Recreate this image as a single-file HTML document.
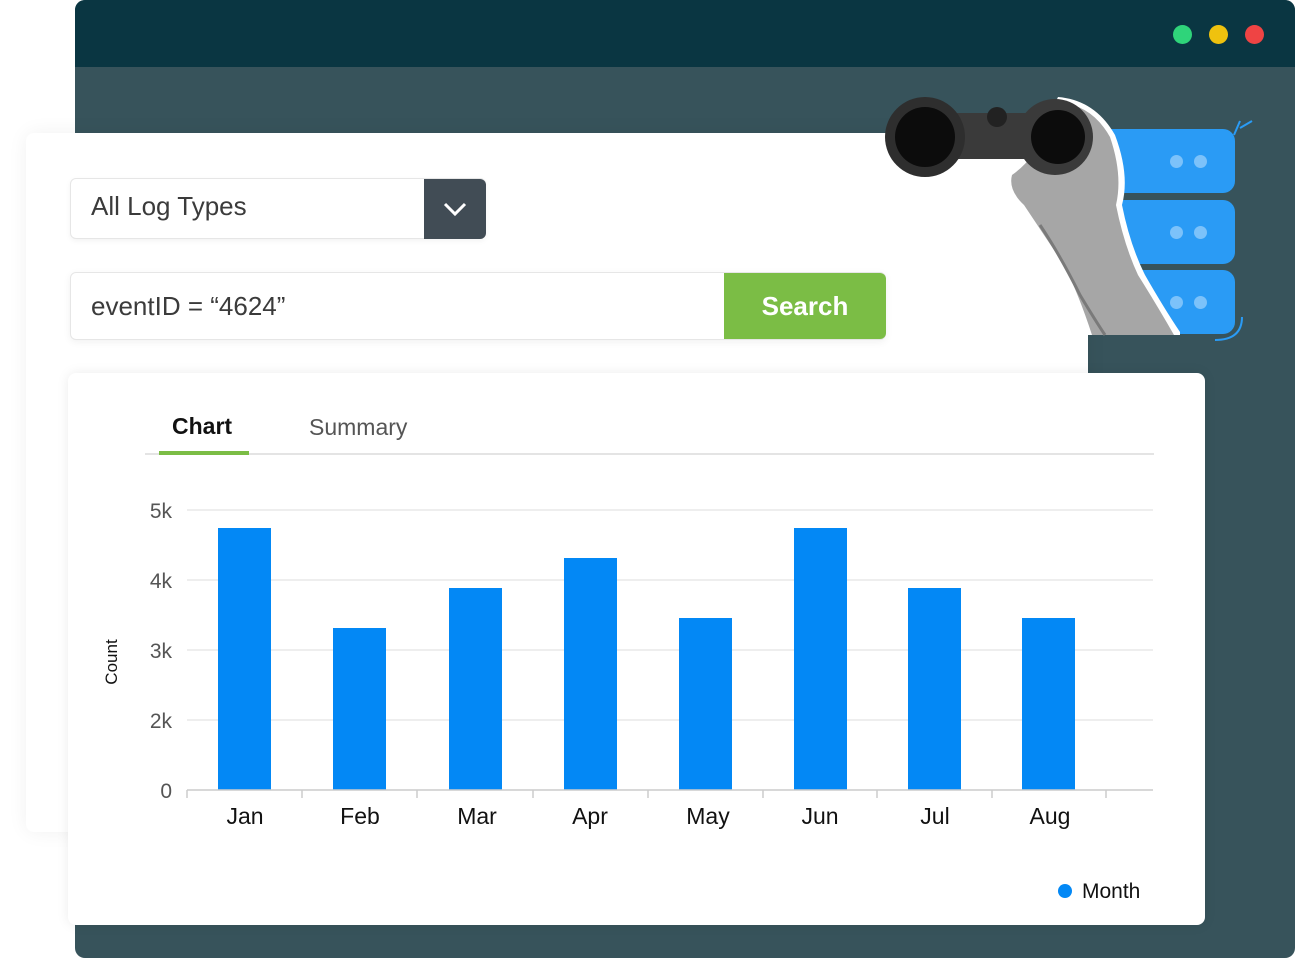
<!DOCTYPE html>
<html><head><meta charset="utf-8"><style>
*{margin:0;padding:0;box-sizing:border-box}
body{width:1302px;height:960px;background:#fff;position:relative;overflow:hidden;font-family:"Liberation Sans",sans-serif}
.abs{position:absolute}
</style></head><body>
<div class="abs" style="left:75px;top:0;width:1220px;height:958px;background:#37535b;border-radius:10px;overflow:hidden">
 <div class="abs" style="left:0;top:0;width:1220px;height:67px;background:#0a3642"></div>
 <div class="abs" style="left:1098px;top:25px;width:19px;height:19px;border-radius:50%;background:#2fd47a"></div>
 <div class="abs" style="left:1134px;top:25px;width:19px;height:19px;border-radius:50%;background:#efc20e"></div>
 <div class="abs" style="left:1170px;top:25px;width:19px;height:19px;border-radius:50%;background:#ef4444"></div>
</div>
<div class="abs" style="left:1100px;top:129px;width:135px;height:64px;background:#2a9bf5;border-radius:12px"></div>
<div class="abs" style="left:1100px;top:200px;width:135px;height:64px;background:#2a9bf5;border-radius:12px"></div>
<div class="abs" style="left:1100px;top:270px;width:135px;height:64px;background:#2a9bf5;border-radius:12px"></div>
<div class="abs" style="left:1170px;top:155px;width:13px;height:13px;border-radius:50%;background:#7cc2fa"></div>
<div class="abs" style="left:1194px;top:155px;width:13px;height:13px;border-radius:50%;background:#7cc2fa"></div>
<div class="abs" style="left:1170px;top:226px;width:13px;height:13px;border-radius:50%;background:#7cc2fa"></div>
<div class="abs" style="left:1194px;top:226px;width:13px;height:13px;border-radius:50%;background:#7cc2fa"></div>
<div class="abs" style="left:1170px;top:296px;width:13px;height:13px;border-radius:50%;background:#7cc2fa"></div>
<div class="abs" style="left:1194px;top:296px;width:13px;height:13px;border-radius:50%;background:#7cc2fa"></div>
<svg class="abs" style="left:1080px;top:95px" width="200" height="260">
 <path d="M160 26 L154 40 M172 26 L160 33" stroke="#2a9bf5" stroke-width="2" fill="none"/>
 <path d="M162 222 Q162 245 135 245" stroke="#2a9bf5" stroke-width="2" fill="none"/>
</svg>
<div class="abs" style="left:26px;top:133px;width:1062px;height:699px;background:#fff;border-radius:8px;box-shadow:0 0 20px rgba(0,0,0,.06)"></div>
<svg class="abs" style="left:880px;top:95px" width="300" height="245">
 <path d="M178 2 Q215 5 235 40 Q250 80 242 110 Q250 150 265 180 Q285 215 302 240 L208 240 Q195 200 180 170 Q160 140 140 110 Q120 95 125 78 Q150 60 165 30 Z" fill="#fff"/>
 <path d="M180 8 Q212 10 230 42 Q243 80 236 110 Q244 150 258 180 Q278 212 294 240 L212 240 Q199 200 184 170 Q164 140 144 110 Q128 95 132 80 Q155 64 168 32 Z" fill="#a6a6a6"/>
 <path d="M160 130 Q180 160 200 200 Q215 225 225 240" stroke="#7a7a7a" stroke-width="3" fill="none"/>
 <rect x="50" y="18" width="130" height="46" rx="20" fill="#3a3a3a"/>
 <circle cx="45" cy="42" r="40" fill="#2e2e2e"/>
 <circle cx="45" cy="42" r="30" fill="#0c0c0c"/>
 <circle cx="175" cy="42" r="38" fill="#3a3a3a"/>
 <circle cx="178" cy="42" r="27" fill="#0c0c0c"/>
 <circle cx="117" cy="22" r="10" fill="#222"/>
</svg>
<div class="abs" style="left:70px;top:178px;width:416px;height:61px;border:1px solid #e6e6e6;border-radius:6px;background:#fff;box-shadow:0 2px 6px rgba(0,0,0,.05)"></div>
<div class="abs" style="left:91px;top:191px;font-size:26px;color:#3b3b3b">All Log Types</div>
<div class="abs" style="left:424px;top:179px;width:62px;height:60px;background:#414c55;border-radius:0 6px 6px 0"></div>
<svg class="abs" style="left:441px;top:198px" width="28" height="22"><path d="M4 6 L14 16 L24 6" stroke="#fff" stroke-width="3" fill="none"/></svg>
<div class="abs" style="left:70px;top:272px;width:816px;height:68px;border:1px solid #e6e6e6;border-radius:6px;background:#fff;box-shadow:0 2px 8px rgba(0,0,0,.06)"></div>
<div class="abs" style="left:91px;top:291px;font-size:26px;color:#3b3b3b">eventID = “4624”</div>
<div class="abs" style="left:724px;top:273px;width:162px;height:66px;background:#7bbd45;border-radius:0 6px 6px 0;color:#fff;font-weight:bold;font-size:26px;text-align:center;line-height:66px">Search</div>
<div class="abs" style="left:68px;top:373px;width:1137px;height:552px;background:#fff;border-radius:8px;box-shadow:0 0 12px rgba(0,0,0,.08)"></div>
<div class="abs" style="left:172px;top:413px;font-size:23px;font-weight:bold;color:#111">Chart</div>
<div class="abs" style="left:309px;top:414px;font-size:23px;color:#555">Summary</div>
<div class="abs" style="left:145px;top:453px;width:1009px;height:2px;background:#e4e4e4"></div>
<div class="abs" style="left:159px;top:451px;width:90px;height:4px;background:#7bbd45"></div>
<svg class="abs" style="left:0;top:0" width="1302" height="960" font-family="Liberation Sans, sans-serif">
 <g stroke="#e8e8e8" stroke-width="1.5">
  <line x1="187" y1="510" x2="1153" y2="510"/><line x1="187" y1="580" x2="1153" y2="580"/>
  <line x1="187" y1="650" x2="1153" y2="650"/><line x1="187" y1="720" x2="1153" y2="720"/>
 </g>
 <g fill="#555" font-size="21" text-anchor="end">
  <text x="172" y="518">5k</text><text x="172" y="588">4k</text><text x="172" y="658">3k</text><text x="172" y="728">2k</text><text x="172" y="798">0</text>
 </g>
 <text transform="translate(117,662) rotate(-90)" font-size="17" fill="#111" text-anchor="middle">Count</text>
 <g fill="#0388f5">
  <rect x="218" y="528" width="53" height="262"/><rect x="333" y="628" width="53" height="162"/>
  <rect x="449" y="588" width="53" height="202"/><rect x="564" y="558" width="53" height="232"/>
  <rect x="679" y="618" width="53" height="172"/><rect x="794" y="528" width="53" height="262"/>
  <rect x="908" y="588" width="53" height="202"/><rect x="1022" y="618" width="53" height="172"/>
 </g>
 <g stroke="#ccc" stroke-width="1.5">
  <line x1="187" y1="790" x2="1153" y2="790"/>
  <line x1="187" y1="790" x2="187" y2="798"/><line x1="302" y1="790" x2="302" y2="798"/><line x1="417" y1="790" x2="417" y2="798"/><line x1="533" y1="790" x2="533" y2="798"/><line x1="648" y1="790" x2="648" y2="798"/><line x1="763" y1="790" x2="763" y2="798"/><line x1="877" y1="790" x2="877" y2="798"/><line x1="992" y1="790" x2="992" y2="798"/><line x1="1106" y1="790" x2="1106" y2="798"/>
 </g>
 <g fill="#111" font-size="23" text-anchor="middle">
  <text x="245" y="824">Jan</text><text x="360" y="824">Feb</text><text x="477" y="824">Mar</text><text x="590" y="824">Apr</text><text x="708" y="824">May</text><text x="820" y="824">Jun</text><text x="935" y="824">Jul</text><text x="1050" y="824">Aug</text>
 </g>
 <circle cx="1065" cy="891" r="7" fill="#0388f5"/>
 <text x="1082" y="898" font-size="21" fill="#111">Month</text>
</svg>
</body></html>
